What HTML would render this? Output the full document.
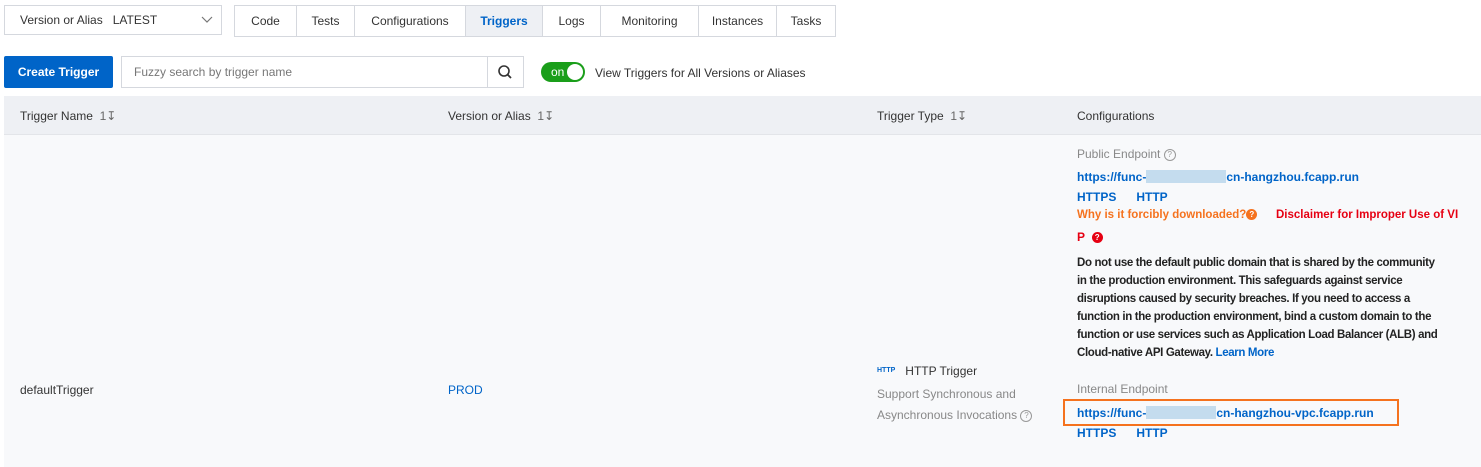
<!DOCTYPE html><html><head><style>
body{margin:0;width:1481px;height:467px;background:#fff;font-family:"Liberation Sans",sans-serif;font-size:12px;color:#333;position:relative;overflow:hidden}
.a{position:absolute;white-space:nowrap}
.tabs{position:absolute;left:234px;top:5px;height:30px;display:flex;border:1px solid #d5d8de}
.tabs div{line-height:30px;border-left:1px solid #d5d8de;font-size:12px;color:#333;text-align:center;box-sizing:border-box}
.tabs div:first-child{border-left:0}
.blue{color:#0064c8}
.b{font-weight:bold}
.hdr{position:absolute;left:4px;top:96px;width:1477px;height:38px;background:#eef0f4;border-bottom:1px solid #e3e5e9}
.row{position:absolute;left:4px;top:135px;width:1477px;height:332px;background:#f8f9fb}
.q{display:inline-block;width:10px;height:10px;border:1px solid #999;border-radius:50%;font-size:8px;line-height:10px;text-align:center;color:#999;vertical-align:middle}
.bq{display:inline-block;width:11px;height:11px;border-radius:50%;font-size:8px;line-height:11px;text-align:center;color:#fff;vertical-align:middle;font-weight:bold}
</style></head><body>
<div class="a" style="left:4px;top:5px;width:218px;height:30px;border:1px solid #d5d8de;box-sizing:border-box;line-height:28px;padding-left:15px;font-size:12px">Version or Alias&nbsp;&nbsp; LATEST<svg style="position:absolute;right:8px;top:10px" width="12" height="8"><path d="M1 1l5 5 5-5" fill="none" stroke="#777" stroke-width="1.2"/></svg></div>
<div class="tabs"><div style="width:61px">Code</div><div style="width:58px">Tests</div><div style="width:111px">Configurations</div><div style="width:77px;background:#eef0f4;color:#0064c8;font-weight:bold">Triggers</div><div style="width:58px">Logs</div><div style="width:98px">Monitoring</div><div style="width:78px">Instances</div><div style="width:59px">Tasks</div></div>
<div class="a" style="left:4px;top:56px;width:109px;height:32px;background:#0064c8;border-radius:2px;color:#fff;font-weight:bold;text-align:center;line-height:32px;font-size:12px">Create Trigger</div>
<div class="a" style="left:121px;top:56px;width:403px;height:32px;border:1px solid #d5d8de;box-sizing:border-box;line-height:30px;padding-left:12px;color:#777;font-size:12px">Fuzzy search by trigger name<div style="position:absolute;right:0;top:0;width:35px;height:30px;border-left:1px solid #d5d8de"><svg width="35" height="30"><circle cx="16" cy="14" r="5" fill="none" stroke="#333" stroke-width="1.6"/><path d="M19.5 17.5L23 21" stroke="#333" stroke-width="1.8"/></svg></div></div>
<div class="a" style="left:541px;top:62px;width:44px;height:20px;background:#1a9e1a;border-radius:10px;color:#fff;font-size:12px;line-height:20px;padding-left:10px;box-sizing:border-box">on<div style="position:absolute;right:2px;top:2px;width:16px;height:16px;border-radius:50%;background:#fff"></div></div>
<div class="a" style="left:595px;top:66px;font-size:12px">View Triggers for All Versions or Aliases</div>
<div class="hdr"></div>
<div class="a" style="left:20px;top:109px">Trigger Name&nbsp; <span style="color:#666">1&#8615;</span></div>
<div class="a" style="left:448px;top:109px">Version or Alias&nbsp; <span style="color:#666">1&#8615;</span></div>
<div class="a" style="left:877px;top:109px">Trigger Type&nbsp; <span style="color:#666">1&#8615;</span></div>
<div class="a" style="left:1077px;top:109px">Configurations</div>
<div class="row"></div>
<div class="a" style="left:20px;top:383px">defaultTrigger</div>
<div class="a blue" style="left:448px;top:383px">PROD</div>
<div class="a" style="left:877px;top:364px"><span style="color:#0064c8;font-size:7px;font-weight:bold;vertical-align:3px">HTTP</span>&nbsp;&nbsp; HTTP Trigger</div>
<div class="a" style="left:877px;top:384px;color:#888;line-height:21px">Support Synchronous and<br>Asynchronous Invocations <span class="q">?</span></div>
<div class="a" style="left:1077px;top:147px;color:#888">Public Endpoint <span class="q">?</span></div>
<div class="a blue b" style="left:1077px;top:170px">https://func-<span style="display:inline-block;width:80px;height:13px;background:#c4dcee;vertical-align:-2px"></span>cn-hangzhou.fcapp.run</div>
<div class="a blue b" style="left:1077px;top:190px">HTTPS&nbsp;&nbsp;&nbsp;&nbsp;&nbsp; HTTP</div>
<div class="a b" style="left:1077px;top:209px;color:#f5721e;font-size:11.5px">Why is it forcibly downloaded?<span class="bq" style="background:#f5721e">?</span></div>
<div class="a b" style="left:1276px;top:209px;color:#e60012;font-size:11.5px">Disclaimer for Improper Use of VI</div>
<div class="a b" style="left:1077px;top:230px;color:#e60012">P&nbsp; <span class="bq" style="background:#e60012">?</span></div>
<div class="a" style="left:1077px;top:254px;line-height:18px;color:#222;font-weight:bold;font-size:11.5px;letter-spacing:-0.35px">Do not use the default public domain that is shared by the community<br>in the production environment. This safeguards against service<br>disruptions caused by security breaches. If you need to access a<br>function in the production environment, bind a custom domain to the<br>function or use services such as Application Load Balancer (ALB) and<br>Cloud-native API Gateway. <span class="blue">Learn More</span></div>
<div class="a" style="left:1077px;top:382px;color:#888">Internal Endpoint</div>
<div class="a" style="left:1063px;top:399px;width:336px;height:27px;border:2px solid #f5721e;box-sizing:border-box"></div>
<div class="a blue b" style="left:1077px;top:406px">https://func-<span style="display:inline-block;width:70px;height:13px;background:#c4dcee;vertical-align:-2px"></span>cn-hangzhou-vpc.fcapp.run</div>
<div class="a blue b" style="left:1077px;top:426px">HTTPS&nbsp;&nbsp;&nbsp;&nbsp;&nbsp; HTTP</div>
</body></html>
